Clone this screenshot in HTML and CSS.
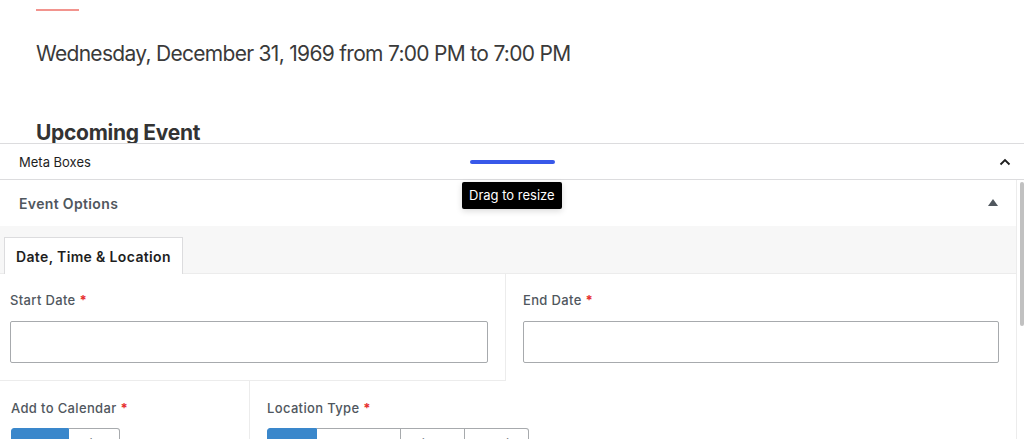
FILE: index.html
```html
<!DOCTYPE html>
<html lang="en">

<head>
    <meta charset="UTF-8">
    <meta name="viewport" content="width=device-width, initial-scale=1.0">
    <title>Event Options</title>
    <link rel="stylesheet" href="styles.css">
</head>

<body>
    <div class="editor">
        <div class="rule"></div>
        <p class="event-date">Wednesday, December 31, 1969 from 7:00 PM to 7:00 PM</p>
        <h2 class="event-heading">Upcoming Event</h2>
    </div>

    <div class="metaboxes">
        <div class="mb-header">
            <span class="mb-title">Meta Boxes</span>
            <span class="handle"></span>
            <svg class="chevron" width="14" height="14" viewBox="0 0 14 14">
                <path d="M2.5 9.5 L7 5 L11.5 9.5" fill="none" stroke="#1e1e1e" stroke-width="1.8" />
            </svg>
            <div class="tooltip">Drag to resize</div>
        </div>

        <div class="mb-body">
            <div class="mb-main">
                <div class="postbox-header">
                    <h3>Event Options</h3>
                    <span class="toggle"></span>
                </div>
                <div class="tabs">
                    <button class="tab active">Date, Time &amp; Location</button>
                </div>
                <div class="tab-panel">
                    <div class="row">
                        <div class="field field-start">
                            <label>Start Date <b>*</b></label>
                            <input type="text">
                        </div>
                        <div class="field field-end">
                            <label>End Date <b>*</b></label>
                            <input type="text">
                        </div>
                    </div>
                    <div class="row">
                        <div class="field field-calendar">
                            <label>Add to Calendar <b>*</b></label>
                            <div class="segments">
                                <button class="active">Show</button>
                                <button>Hide</button>
                            </div>
                        </div>
                        <div class="field field-location">
                            <label>Location Type <b>*</b></label>
                            <div class="segments">
                                <button class="active">TBD</button>
                                <button class="wide">In-Person</button>
                                <button>Virtual</button>
                                <button>Hybrid</button>
                            </div>
                        </div>
                    </div>
                </div>
            </div>
            <div class="scrollbar">
                <div class="thumb"></div>
            </div>
        </div>
    </div>
</body>

</html>
```

FILE: styles.css
```css
* {
    box-sizing: border-box;
}

body {
    margin: 0;
    height: 439px;
    overflow: hidden;
    background-color: #fff;
    font-family: Inter, "Noto Sans", sans-serif;
    color: #1e1e1e;
}

/* editor canvas */

.editor {
    height: 143px;
    padding: 9px 0 0 36px;
    overflow: hidden;
}

.editor .rule {
    width: 43px;
    height: 2px;
    background-color: #f2948e;
}

.editor .event-date {
    margin: 30px 0 0;
    font-size: 21px;
    line-height: 26px;
    letter-spacing: -0.7px;
    color: #3a3a3a;
}

.editor .event-heading {
    margin: 53px 0 0;
    font-size: 21px;
    line-height: 25px;
    font-weight: 700;
    letter-spacing: -0.3px;
    color: #333;
}

/* meta boxes panel */

.metaboxes {
    border-top: 1px solid #dcdcde;
}

.mb-header {
    position: relative;
    display: flex;
    align-items: center;
    height: 36px;
    padding: 0 12px 0 19px;
    border-bottom: 1px solid #dcdcde;
}

.mb-title {
    font-size: 13px;
}

.mb-header .handle {
    width: 85px;
    height: 4px;
    margin-left: 379px;
    border-radius: 2px;
    background-color: #3858e9;
}

.mb-header .chevron {
    margin-left: auto;
}

.tooltip {
    position: absolute;
    top: 38px;
    left: 462px;
    z-index: 10;
    padding: 5px 7px;
    border-radius: 2px;
    background-color: #000;
    color: #fff;
    font-size: 13px;
    line-height: 17px;
    box-shadow: 0 2px 6px rgba(0, 0, 0, .15);
}

.mb-body {
    display: flex;
}

.mb-main {
    flex: 1;
}

.scrollbar {
    width: 8px;
    padding: 2px 0 0 3px;
    border-left: 1px solid #ececec;
}

.scrollbar .thumb {
    width: 4px;
    height: 144px;
    border-radius: 2px;
    background-color: #c1c1c1;
}

.postbox-header {
    display: flex;
    align-items: center;
    justify-content: space-between;
    height: 46px;
    padding: 0 18px 0 19px;
}

.postbox-header h3 {
    margin: 0;
    font-size: 14px;
    font-weight: 600;
    letter-spacing: .35px;
    color: #50575e;
}

.postbox-header .toggle {
    width: 0;
    height: 0;
    margin-top: -2px;
    border-left: 5px solid transparent;
    border-right: 5px solid transparent;
    border-bottom: 7px solid #50575e;
}

/* tabs */

.tabs {
    display: flex;
    height: 48px;
    padding: 11px 0 0 4px;
    border-bottom: 1px solid #ececec;
    background-color: #f7f7f7;
}

.tab {
    height: 37px;
    margin-bottom: -1px;
    padding: 0 11px;
    border: 1px solid #dcdcde;
    border-bottom: none;
    background-color: #fff;
    font-family: inherit;
    font-size: 14px;
    font-weight: 600;
    letter-spacing: .35px;
    color: #1e1e1e;
}

/* fields */

.row {
    display: flex;
}

.field label {
    display: block;
    font-size: 13px;
    line-height: 18px;
    font-weight: 500;
    letter-spacing: .35px;
    color: #50575e;
}

.field label b {
    color: #e62e2e;
}

.field input {
    display: block;
    width: 100%;
    height: 42px;
    margin-top: 12px;
    border: 1px solid #a7aaad;
    border-radius: 2px;
}

.field-start {
    width: 506px;
    padding: 17px 17px 17px 10px;
    border-right: 1px solid #ececec;
    border-bottom: 1px solid #ececec;
}

.field-end {
    flex: 1;
    padding: 17px 17px 17px 17px;
}

.field-calendar {
    width: 250px;
    padding: 18px 0 0 11px;
    border-right: 1px solid #ececec;
}

.field-location {
    flex: 1;
    padding: 18px 0 0 17px;
}

.segments {
    display: flex;
    margin-top: 11px;
}

.segments button {
    height: 32px;
    padding: 0;
    border: 1px solid #a7aaad;
    border-left: none;
    background-color: #fff;
    font-family: inherit;
    font-size: 13px;
    white-space: nowrap;
    color: #50575e;
}

.segments button:first-child {
    border-left: 1px solid #a7aaad;
    border-radius: 3px 0 0 3px;
}

.segments button:last-child {
    border-radius: 0 3px 3px 0;
}

.segments button.active {
    border-color: #3a87cb;
    background-color: #3a87cb;
    color: #fff;
}

.field-calendar .segments button {
    width: 51px;
}

.field-calendar .segments button:first-child {
    width: 58px;
}

.field-location .segments button {
    width: 64px;
}

.field-location .segments button:first-child {
    width: 50px;
}

.field-location .segments button.wide {
    width: 84px;
}
```
